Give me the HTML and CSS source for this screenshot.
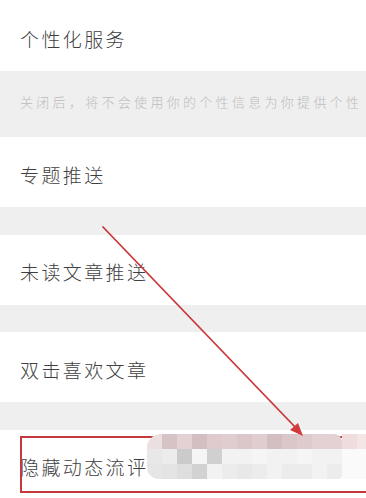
FILE: index.html
```html
<!DOCTYPE html>
<html lang="zh-CN">
<head>
<meta charset="utf-8">
<link rel="stylesheet" href="styles.css">
</head>
<body>
<div class="page">
  <div class="row row-first"><span class="label">个性化服务</span></div>
  <div class="desc">关闭后，将不会使用你的个性信息为你提供个性</div>
  <div class="row"><span class="label">专题推送</span></div>
  <div class="gap"></div>
  <div class="row"><span class="label">未读文章推送</span></div>
  <div class="gap"></div>
  <div class="row"><span class="label">双击喜欢文章</span></div>
  <div class="gap"></div>
  <div class="row"><span class="label">隐藏动态流评论</span></div>

  <div class="highlight"></div>
  <div class="mosaic">
    <i class="c p1 r-tl"></i><i class="c p0"></i><i class="c p2"></i><i class="c p3"></i><i class="c p4"></i><i class="c p5"></i><i class="c p6"></i><i class="c p5"></i><i class="c p3"></i><i class="c p6"></i><i class="c p4"></i><i class="c p2"></i><i class="c p2 r-tr"></i><i class="c p7"></i><i class="c p8"></i>
    <i class="c g1"></i><i class="c g2"></i><i class="c g5"></i><i class="c g0"></i><i class="c g4"></i><i class="c g3"></i><i class="c g3"></i><i class="c g0"></i><i class="c g3"></i><i class="c g3"></i><i class="c g0"></i><i class="c g3"></i><i class="c g3"></i><i class="c w"></i><i class="c w"></i>
    <i class="c g6 r-bl"></i><i class="c g7"></i><i class="c g8"></i><i class="c g9"></i><i class="c g3"></i><i class="c g2"></i><i class="c g1"></i><i class="c g2"></i><i class="c g3"></i><i class="c g2"></i><i class="c g2"></i><i class="c g3"></i><i class="c g2 r-br"></i><i class="c w"></i><i class="c w"></i>
  </div>
  <svg class="arrow" width="366" height="498" viewBox="0 0 366 498">
    <line x1="103" y1="227" x2="296" y2="428" stroke="#c9383b" stroke-width="1.8" stroke-linecap="round"/>
    <polygon points="303,436 290,430 298,423" fill="#d23a3c"/>
  </svg>
</div>
</body>
</html>
```
FILE: styles.css
```css
html, body {
  margin: 0;
  padding: 0;
}
body {
  width: 366px;
  height: 498px;
  overflow: hidden;
  background: #efefef;
  font-family: "Noto Sans CJK SC", "Noto Sans", sans-serif;
}
.page {
  position: relative;
  width: 366px;
  height: 498px;
  overflow: hidden;
}
.row {
  height: 70px;
  background: #ffffff;
  display: flex;
  align-items: center;
  padding: 4px 0 0 20px;
  box-sizing: border-box;
}
.row-first {
  height: 71px;
  padding-top: 5px;
}
.label {
  font-size: 19px;
  font-weight: 300;
  letter-spacing: 2.4px;
  color: #3f3f3f;
  white-space: nowrap;
}
.desc {
  height: 66px;
  box-sizing: border-box;
  padding: 22px 0 0 20px;
  font-size: 13px;
  font-weight: 300;
  letter-spacing: 3.3px;
  color: #bcbcbc;
  white-space: nowrap;
  line-height: 18px;
}
.gap {
  height: 27.5px;
}
.highlight {
  position: absolute;
  left: 20px;
  top: 436px;
  width: 360px;
  height: 57px;
  border: 2px solid #c4393c;
  box-sizing: border-box;
}
.mosaic {
  position: absolute;
  left: 147px;
  top: 434px;
  display: grid;
  grid-template-columns: repeat(15, 15px);
  grid-template-rows: repeat(3, 15px);
  filter: blur(0.6px);
}
.c { display: block; }
.r-tl { border-top-left-radius: 14px; }
.r-tr { border-top-right-radius: 8px; }
.r-bl { border-bottom-left-radius: 12px; }
.r-br { border-bottom-right-radius: 4px; }
.p0 { background: #d7c3c5; }
.p1 { background: #ecdfe0; }
.p2 { background: #e3d1d3; }
.p3 { background: #d3bfc1; }
.p4 { background: #dfcacd; }
.p5 { background: #e0cdd0; }
.p6 { background: #dbc6c9; }
.p7 { background: #efdcdd; }
.p8 { background: #f4e6e6; }
.g0 { background: #f5f5f5; }
.g1 { background: #e8e8e8; }
.g2 { background: #ececec; }
.g3 { background: #f2f2f2; }
.g4 { background: #d0d0d0; }
.g5 { background: #cbcbcb; }
.g6 { background: #e6e6e6; }
.g7 { background: #e4e4e4; }
.g8 { background: #dedede; }
.g9 { background: #d2d2d2; }
.w { background: #fafafa; }
.arrow {
  position: absolute;
  left: 0;
  top: 0;
}
```
